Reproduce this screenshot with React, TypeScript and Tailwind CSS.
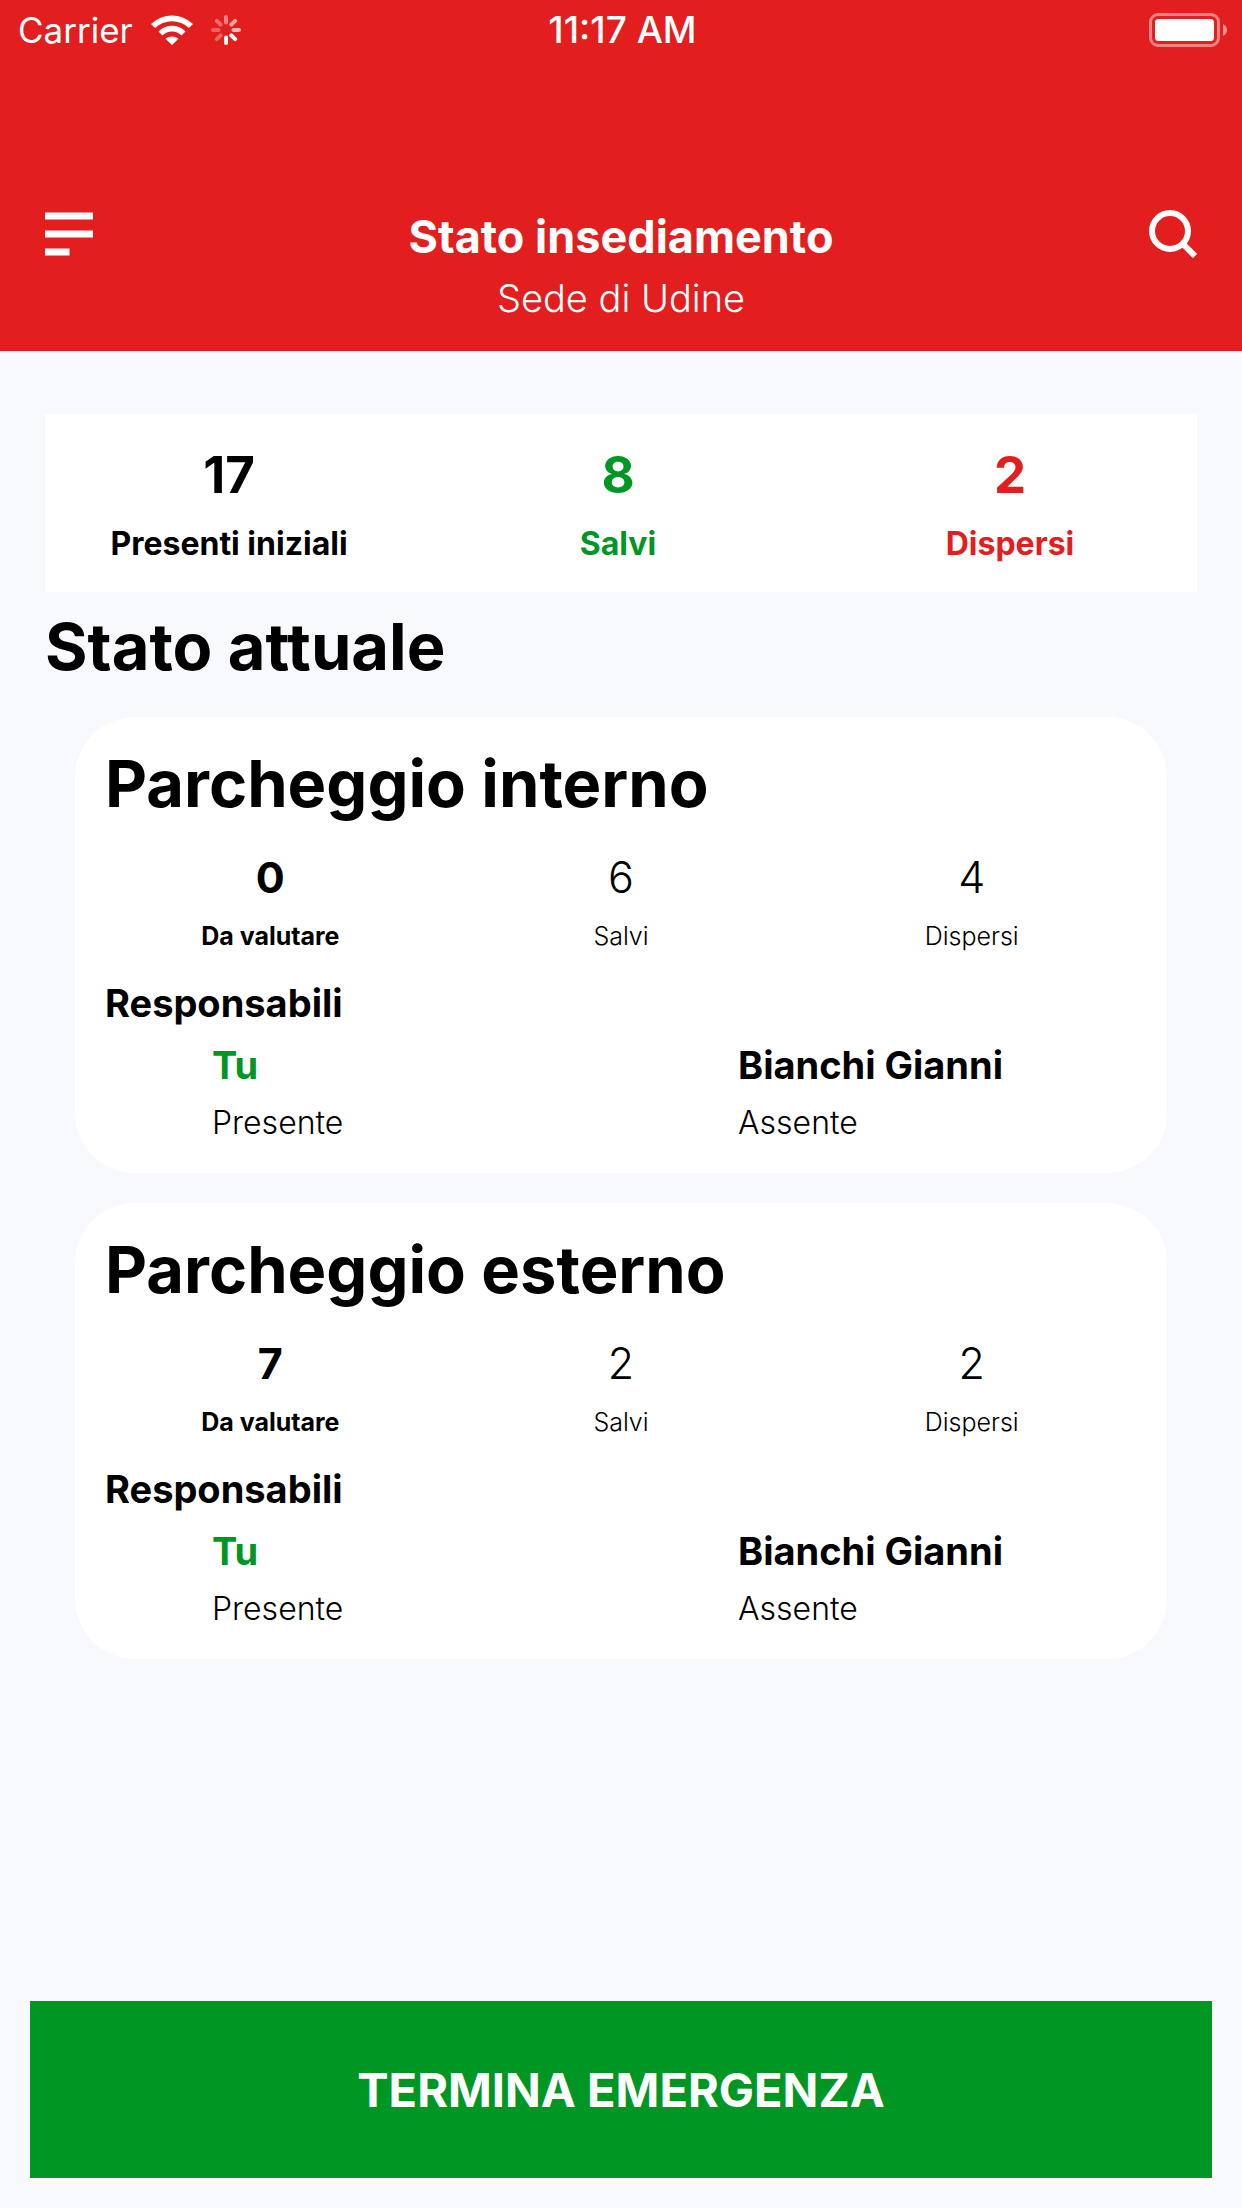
type Stat = { value: number; label: string };
type Manager = { name: string; status: string; self?: boolean };
type Area = { name: string; toAssess: number; safe: number; missing: number; managers: Manager[] };

const managers: Manager[] = [
  { name: "Tu", status: "Presente", self: true },
  { name: "Bianchi Gianni", status: "Assente" },
];

const areas: Area[] = [
  { name: "Parcheggio interno", toAssess: 0, safe: 6, missing: 4, managers },
  { name: "Parcheggio esterno", toAssess: 7, safe: 2, missing: 2, managers },
];

const summary: (Stat & { color: string })[] = [
  { value: 17, label: "Presenti iniziali", color: "text-black" },
  { value: 8, label: "Salvi", color: "text-[#009624]" },
  { value: 2, label: "Dispersi", color: "text-[#e21e1e]" },
];

function WifiIcon() {
  return (
    <svg className="h-[30px] w-[42px]" viewBox="0 0 42 30" fill="white" aria-hidden="true">
      <path d="M0 9A30 30 0 0 1 42 9L38 13A24.500 24.500 0 0 0 4 13Z" />
      <path d="M7.500 16.500A19 19 0 0 1 34.500 16.500L30.500 20.500A13.500 13.500 0 0 0 11.500 20.500Z" />
      <path d="M14.500 23.800A10 10 0 0 1 27.500 23.800L21 30Z" />
    </svg>
  );
}

// Opacity of each spoke, clockwise from the top.
const spokes = [0.45, 0.6, 0.7, 1, 1, 0.3, 0.3, 0.35];

function Spinner() {
  return (
    <svg className="h-[30px] w-[30px]" viewBox="0 0 30 30" aria-hidden="true">
      {spokes.map((opacity, i) => (
        <line
          key={i}
          x1="15"
          y1="2"
          x2="15"
          y2="7.500"
          stroke="white"
          strokeWidth="4"
          strokeLinecap="round"
          opacity={opacity}
          transform={`rotate(${i * 45} 15 15)`}
        />
      ))}
    </svg>
  );
}

function BatteryIcon() {
  return (
    <svg className="h-[34px] w-[78px]" viewBox="0 0 78 34" aria-hidden="true">
      <rect x="1.500" y="1.500" width="68" height="31" rx="7.500" fill="none" stroke="white" strokeOpacity="0.45" strokeWidth="3" />
      <rect x="6" y="6" width="59" height="22" rx="3.500" fill="white" />
      <path d="M74 11Q78 13 78 17T74 23Z" fill="white" fillOpacity="0.5" />
    </svg>
  );
}

function StatusBar() {
  return (
    <div className="grid h-15 grid-cols-[1fr_auto_1fr] items-center pr-[15px] pl-[18px] leading-[44px]">
      <div className="flex items-center gap-[18px] text-[35px]">
        <span>Carrier</span>
        <WifiIcon />
        <Spinner />
      </div>
      <span className="text-[37px] font-medium">11:17 AM</span>
      <div className="flex justify-end">
        <BatteryIcon />
      </div>
    </div>
  );
}

function Header() {
  return (
    <header className="bg-[#e21e1e] pb-[30px] text-white">
      <StatusBar />
      <div className="flex items-start justify-between px-[45px] pt-[150px]">
        <button type="button" aria-label="Menu">
          <svg className="mt-0.5 h-11 w-12" viewBox="0 0 48 44" fill="white" aria-hidden="true">
            <rect y="0.500" width="48" height="7" />
            <rect y="18.500" width="48" height="7" />
            <rect y="36.500" width="24.500" height="7" />
          </svg>
        </button>
        <div className="text-center">
          <h1 className="text-[45px] leading-[54px] font-bold">Stato insediamento</h1>
          <p className="mt-3 text-[38px] leading-[45px] font-light">Sede di Udine</p>
        </div>
        <button type="button" aria-label="Cerca">
          <svg className="h-12 w-12" viewBox="0 0 48 48" fill="none" stroke="white" strokeWidth="6" aria-hidden="true">
            <circle cx="21" cy="21" r="18" />
            <path d="M33.500 33.500L46 46" />
          </svg>
        </button>
      </div>
    </header>
  );
}

function AreaStat({ value, label, strong }: Stat & { strong?: boolean }) {
  return (
    <div className={strong ? "font-bold" : "font-light"}>
      <p className="text-[43px] leading-[52px]">{value}</p>
      <p className="mt-[18px] text-[25px] leading-[30px]">{label}</p>
    </div>
  );
}

function AreaCard({ area }: { area: Area }) {
  return (
    <article className="rounded-[60px] bg-white px-5 pt-[30px] pb-8">
      <h3 className="pl-2.5 text-[65px] leading-[74px] font-bold">{area.name}</h3>
      <div className="mt-[30px] grid grid-cols-3 text-center">
        <AreaStat value={area.toAssess} label="Da valutare" strong />
        <AreaStat value={area.safe} label="Salvi" />
        <AreaStat value={area.missing} label="Dispersi" />
      </div>
      <h4 className="mt-[30px] pl-2.5 text-[38px] leading-[44px] font-bold">Responsabili</h4>
      <ul className="mt-[18px] grid grid-cols-2">
        {area.managers.map((m) => (
          <li key={m.name} className="pl-[117px]">
            <p className={m.self ? "text-[38px] leading-[44px] font-bold text-[#009624]" : "text-[38px] leading-[44px] font-bold"}>
              {m.name}
            </p>
            <p className="mt-[18px] text-[32px] leading-[36px] font-light">{m.status}</p>
          </li>
        ))}
      </ul>
    </article>
  );
}

export default function App() {
  return (
    <div className="flex min-h-screen flex-col bg-[#f8f9fd] font-['Inter',sans-serif] text-black">
      <Header />
      <main className="px-[45px] pt-[63px]">
        <section className="grid grid-cols-[368fr_410fr_374fr] bg-white pt-[30px] pb-[30px] text-center font-bold">
          {summary.map((s) => (
            <div key={s.label} className={s.color}>
              <p className="text-[51px] leading-[62px]">{s.value}</p>
              <p className="mt-5 text-[32px] leading-[36px]">{s.label}</p>
            </div>
          ))}
        </section>
        <h2 className="mt-[18px] text-[65px] leading-[74px] font-bold">Stato attuale</h2>
        <div className="mt-[33px] flex flex-col gap-[30px] px-[30px]">
          {areas.map((a) => (
            <AreaCard key={a.name} area={a} />
          ))}
        </div>
      </main>
      <footer className="mt-auto p-[30px]">
        <button type="button" className="w-full bg-[#009624] py-[60px] text-[47px] leading-[57px] font-bold text-white">
          TERMINA EMERGENZA
        </button>
      </footer>
    </div>
  );
}
